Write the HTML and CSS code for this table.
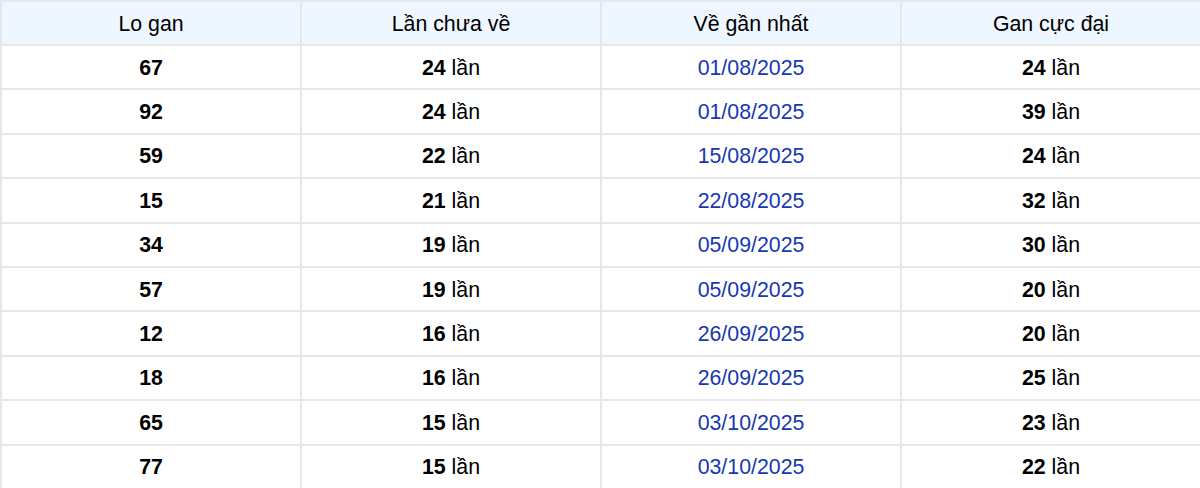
FILE: index.html
```html
<!DOCTYPE html>
<html lang="vi">
<head>
<meta charset="utf-8">
<title>Lo gan</title>
<link rel="stylesheet" href="styles.css">
</head>
<body>
<table class="gan-table">
  <thead>
    <tr>
      <th>Lo gan</th>
      <th>Lần chưa về</th>
      <th>Về gần nhất</th>
      <th>Gan cực đại</th>
    </tr>
  </thead>
  <tbody>
    <tr><td class="num">67</td><td><b>24</b> lần</td><td class="date">01/08/2025</td><td><b>24</b> lần</td></tr>
    <tr><td class="num">92</td><td><b>24</b> lần</td><td class="date">01/08/2025</td><td><b>39</b> lần</td></tr>
    <tr><td class="num">59</td><td><b>22</b> lần</td><td class="date">15/08/2025</td><td><b>24</b> lần</td></tr>
    <tr><td class="num">15</td><td><b>21</b> lần</td><td class="date">22/08/2025</td><td><b>32</b> lần</td></tr>
    <tr><td class="num">34</td><td><b>19</b> lần</td><td class="date">05/09/2025</td><td><b>30</b> lần</td></tr>
    <tr><td class="num">57</td><td><b>19</b> lần</td><td class="date">05/09/2025</td><td><b>20</b> lần</td></tr>
    <tr><td class="num">12</td><td><b>16</b> lần</td><td class="date">26/09/2025</td><td><b>20</b> lần</td></tr>
    <tr><td class="num">18</td><td><b>16</b> lần</td><td class="date">26/09/2025</td><td><b>25</b> lần</td></tr>
    <tr><td class="num">65</td><td><b>15</b> lần</td><td class="date">03/10/2025</td><td><b>23</b> lần</td></tr>
    <tr><td class="num">77</td><td><b>15</b> lần</td><td class="date">03/10/2025</td><td><b>22</b> lần</td></tr>
  </tbody>
</table>
</body>
</html>
```

FILE: styles.css
```css
html, body {
  margin: 0;
  padding: 0;
  background: #ffffff;
}

body {
  font-family: "Liberation Sans", Arial, sans-serif;
  color: #000000;
  overflow: hidden;
}

.gan-table {
  width: 1202px;
  border-collapse: collapse;
  table-layout: fixed;
  font-size: 21.33px;
}

.gan-table th,
.gan-table td {
  border: 2px solid #e6e7ea;
  text-align: center;
  vertical-align: middle;
  padding: 2px 0 0;
}

.gan-table th {
  background: #eef6ff;
  font-weight: normal;
  height: 40px;
}

.gan-table td {
  height: 40.4px;
}

.gan-table b,
.gan-table .num {
  font-weight: bold;
}

.gan-table .date {
  color: #1638b2;
}
```
